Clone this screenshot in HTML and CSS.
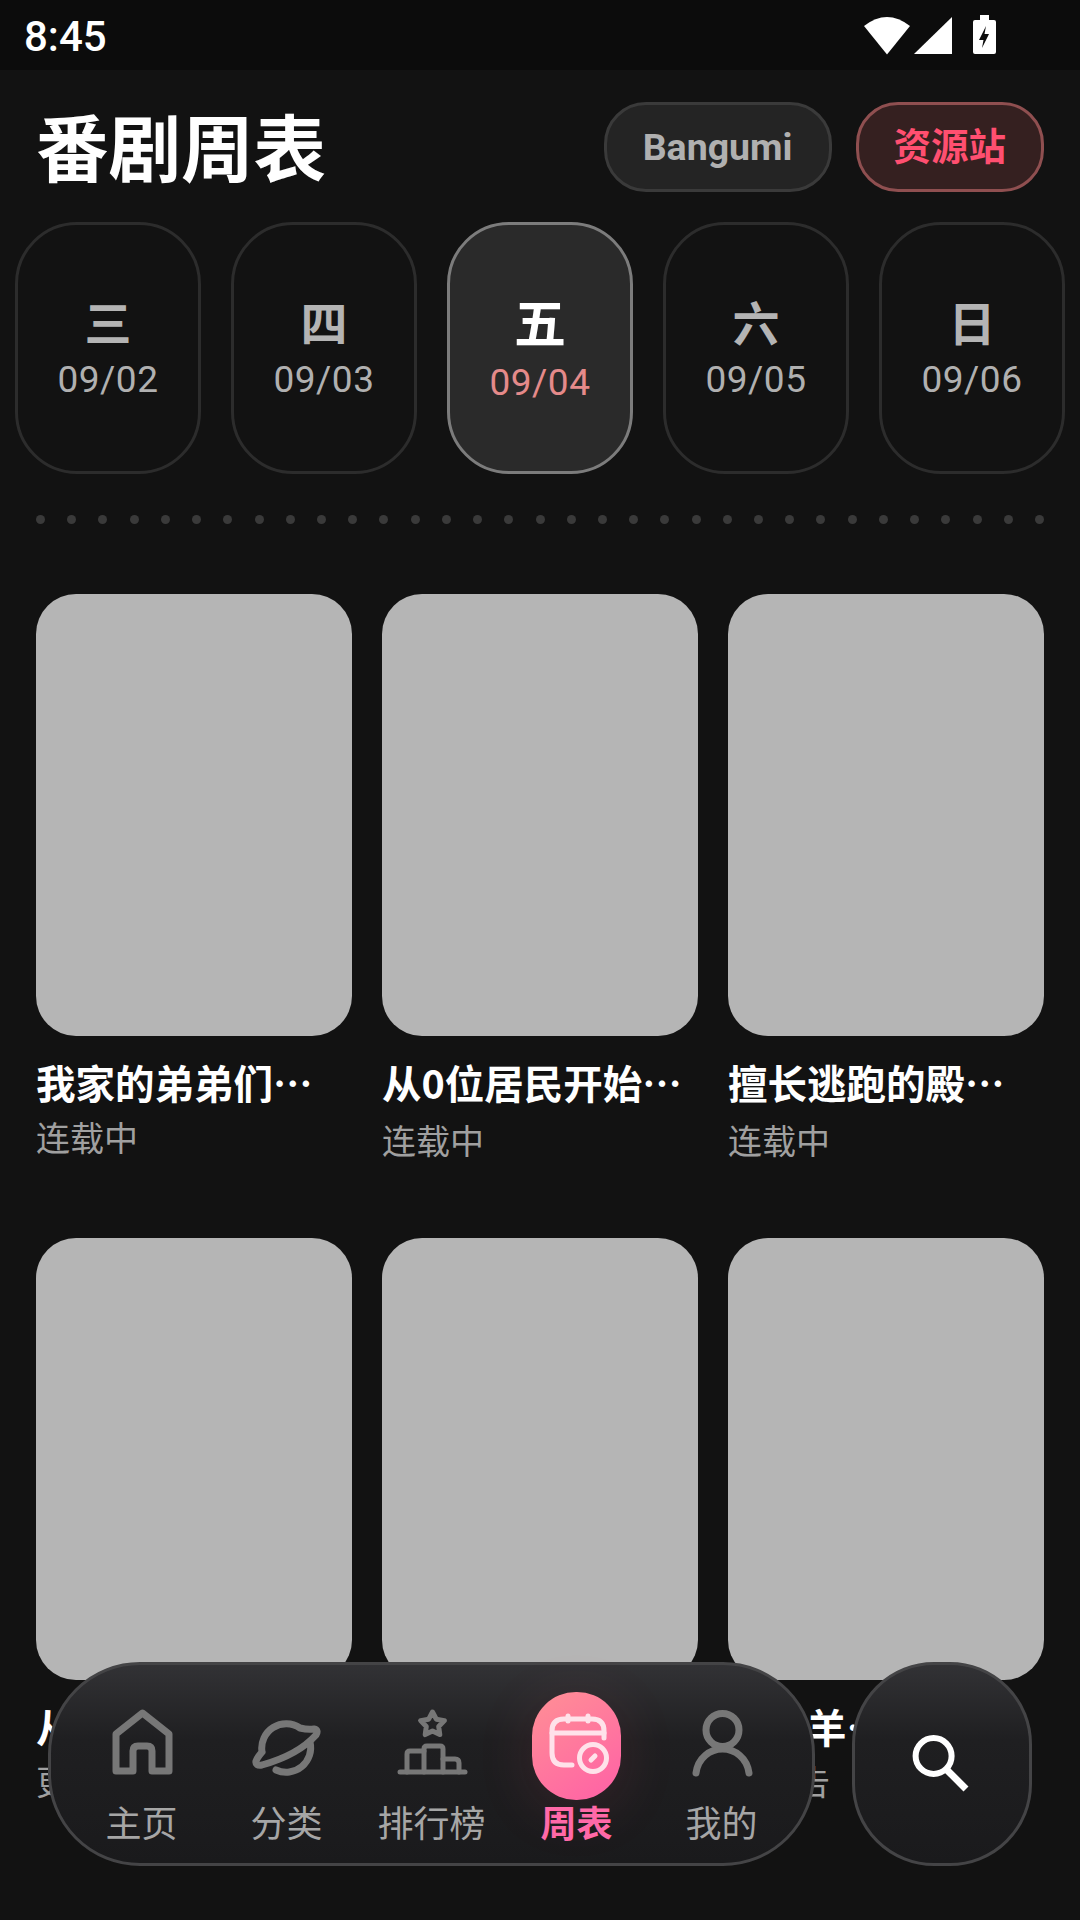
FILE: index.html
```html
<!DOCTYPE html>
<html lang="zh-CN">
<head>
<meta charset="UTF-8">
<meta name="viewport" content="width=device-width, initial-scale=1.0">
<title>番剧周表</title>
<link rel="stylesheet" href="styles.css">
</head>
<body>
<div class="status-bar">
    <span class="status-time">8:45</span>
    <div class="status-icons">
        <svg class="icon-wifi" width="46" height="38" viewBox="0 0 46 38">
            <path d="M23 37.5 L0 9 Q23 -9 46 9 Z" fill="#fff"/>
        </svg>
        <svg class="icon-signal" width="38" height="38" viewBox="0 0 38 38">
            <path d="M38 0 V37 H0 Z" fill="#fff"/>
        </svg>
        <svg class="icon-battery" width="23" height="39" viewBox="0 0 23 39">
            <path d="M7 0 H16 V5 H21 Q23 5 23 7 V37 Q23 39 21 39 H2 Q0 39 0 37 V7 Q0 5 2 5 H7 Z" fill="#fff"/>
            <path d="M13 11 L6 25 H10.5 L9 33 L16 19 H11.5 Z" fill="#0c0c0c"/>
        </svg>
    </div>
</div>

<header class="header">
    <h1 class="page-title">番剧周表</h1>
    <div class="header-buttons">
        <div class="pill-button">Bangumi</div>
        <div class="pill-button pill-button-red">资源站</div>
    </div>
</header>

<div class="days">
    <div class="day"><span class="day-name">三</span><span class="day-date">09/02</span></div>
    <div class="day"><span class="day-name">四</span><span class="day-date">09/03</span></div>
    <div class="day day-active"><span class="day-name">五</span><span class="day-date">09/04</span></div>
    <div class="day"><span class="day-name">六</span><span class="day-date">09/05</span></div>
    <div class="day"><span class="day-name">日</span><span class="day-date">09/06</span></div>
</div>

<div class="dots">
    <i></i><i></i><i></i><i></i><i></i><i></i><i></i><i></i><i></i><i></i><i></i>
    <i></i><i></i><i></i><i></i><i></i><i></i><i></i><i></i><i></i><i></i><i></i>
    <i></i><i></i><i></i><i></i><i></i><i></i><i></i><i></i><i></i><i></i><i></i>
</div>

<div class="grid">
    <div class="card">
        <div class="cover"></div>
        <div class="card-title">我家的弟弟们…</div>
        <div class="card-status">连载中</div>
    </div>
    <div class="card">
        <div class="cover"></div>
        <div class="card-title">从0位居民开始…</div>
        <div class="card-status card-status-low">连载中</div>
    </div>
    <div class="card">
        <div class="cover"></div>
        <div class="card-title">擅长逃跑的殿…</div>
        <div class="card-status card-status-low">连载中</div>
    </div>
    <div class="card">
        <div class="cover"></div>
        <div class="card-title">从前有座山…</div>
        <div class="card-status">更新中</div>
    </div>
    <div class="card">
        <div class="cover"></div>
    </div>
    <div class="card">
        <div class="cover"></div>
        <div class="card-title">小绵羊…</div>
        <div class="card-status">未公告</div>
    </div>
</div>

<nav class="bottom-nav">
    <div class="nav-item">
        <div class="nav-icon">
            <svg width="72" height="72" viewBox="-7 -2 72 72">
                <path d="M3 24 L29.5 3 L56 24 V61 H39 V41 Q39 36 34 36 H25 Q20 36 20 41 V61 H3 Z"/>
            </svg>
        </div>
        <span class="nav-label">主页</span>
    </div>
    <div class="nav-item">
        <div class="nav-icon">
            <svg width="72" height="72" viewBox="1 -7 72 72">
                <path d="M12 37 A24.5 24.5 0 0 1 50 13 Q58 15 64 14 Q69 15 66 20 Q48 40 12 50 Q5 51 6 46 Q7 43 12 37"/>
                <path d="M60 27 A24.5 24.5 0 0 1 26 55"/>
            </svg>
        </div>
        <span class="nav-label">分类</span>
    </div>
    <div class="nav-item">
        <div class="nav-icon">
            <svg width="72" height="72" viewBox="-4 0 72 72">
                <path class="thin" d="M0 64 H65"/>
                <path class="thin" d="M7 64 V46 Q7 43 10 43 H24"/>
                <path class="thin" d="M24 64 V41 Q24 38 27 38 H40 Q43 38 43 41 V64"/>
                <path class="thin" d="M43 51 H55 Q59 51 59 55 V64"/>
                <path class="thin" d="M32.5 4 L36.3 11.2 L44.4 12.6 L38.7 18.5 L39.8 26.6 L32.5 23 L25.2 26.6 L26.3 18.5 L20.6 12.6 L28.7 11.2 Z"/>
            </svg>
        </div>
        <span class="nav-label">排行榜</span>
    </div>
    <div class="nav-item nav-item-active">
        <div class="nav-icon">
            <svg width="72" height="72" viewBox="-7 -5 72 72">
                <path d="M56 25 V18 Q56 6 44 6 H16 Q4 6 4 18 V40 Q4 52 16 52 H24"/>
                <path d="M4 20 H56"/>
                <path d="M20 3 V8"/>
                <path d="M40 3 V8"/>
                <circle cx="45" cy="45" r="13.5"/>
                <path d="M43 47 L47 43"/>
            </svg>
        </div>
        <span class="nav-label">周表</span>
    </div>
    <div class="nav-item">
        <div class="nav-icon">
            <svg width="72" height="72" viewBox="-4 0 72 72">
                <circle cx="32.5" cy="22" r="16.5"/>
                <path d="M6 65 C8 50 20 41 32.5 41 C45 41 57 50 59 65"/>
            </svg>
        </div>
        <span class="nav-label">我的</span>
    </div>
</nav>

<div class="search-button">
    <svg width="62" height="62" viewBox="0 0 62 62">
        <circle cx="23.6" cy="24" r="18" fill="none" stroke="#fff" stroke-width="6"/>
        <path d="M37 38 L56 57" stroke="#fff" stroke-width="7" fill="none"/>
    </svg>
</div>
</body>
</html>
```

FILE: styles.css
```css
* {
    box-sizing: border-box;
}
html, body {
    width: 1080px;
    height: 1920px;
    margin: 0;
    padding: 0;
    overflow: hidden;
}
body {
    position: relative;
    background: #121212;
    color: #fff;
    font-family: "Noto Sans CJK SC", Roboto, sans-serif;
}

.status-bar {
    height: 70px;
    background: #0c0c0c;
    display: flex;
    align-items: flex-start;
    justify-content: space-between;
    padding: 13px 84px 0 24px;
}
.status-time {
    font-family: Roboto, sans-serif;
    font-size: 42px;
    font-weight: 500;
    line-height: 48px;
}
.status-icons {
    display: flex;
    align-items: flex-start;
    gap: 4px;
    margin-top: 2px;
}
.icon-wifi, .icon-signal {
    margin-top: 2px;
}
.icon-battery {
    margin-left: 17px;
}

.header {
    height: 152px;
    display: flex;
    align-items: flex-start;
    justify-content: space-between;
    padding: 27px 36px 0;
}
.page-title {
    margin: 0;
    font-size: 72.5px;
    font-weight: 700;
    line-height: 96px;
}
.header-buttons {
    display: flex;
    gap: 24px;
    margin-top: 5px;
}
.pill-button {
    height: 90px;
    padding: 0 36px;
    border: 3px solid #3a3a3a;
    border-radius: 42px;
    background: #242424;
    color: #b0b0b0;
    font-family: Roboto, "Noto Sans CJK SC", sans-serif;
    font-size: 37.5px;
    font-weight: 700;
    line-height: 84px;
}
.pill-button-red {
    padding: 0 35px;
    border-color: #8f4f50;
    background: #352020;
    color: #ff4f70;
}

.days {
    display: flex;
    gap: 30px;
    padding-left: 15px;
}
.day {
    width: 186px;
    height: 252px;
    border: 3px solid #2c2c2c;
    border-radius: 62px;
    display: flex;
    flex-direction: column;
    align-items: center;
    padding-top: 66px;
}
.day-name {
    font-size: 47px;
    font-weight: 700;
    line-height: 60px;
    color: #b4b4b4;
}
.day-date {
    font-family: Roboto, sans-serif;
    font-size: 37px;
    font-weight: 400;
    letter-spacing: 0.5px;
    line-height: 42px;
    margin-top: 8px;
    color: #b0b0b0;
}
.day-active {
    background: #2a2a2a;
    border-color: #7c7c7c;
}
.day-active .day-name {
    font-size: 52px;
    color: #fff;
}
.day-active .day-date {
    margin-top: 11px;
    color: #e58a8a;
}

.dots {
    display: flex;
    justify-content: space-between;
    margin: 41px 36px 0;
}
.dots i {
    width: 9px;
    height: 9px;
    border-radius: 50%;
    background: #3a3a3a;
}

.grid {
    display: grid;
    grid-template-columns: repeat(3, 316px);
    column-gap: 30px;
    row-gap: 78px;
    padding: 70px 36px 0;
}
.cover {
    height: 442px;
    border-radius: 40px;
    background: #b5b5b5;
}
.card-title {
    margin-top: 23px;
    font-size: 39.5px;
    font-weight: 700;
    line-height: 46px;
    white-space: nowrap;
}
.card-status {
    margin-top: 12px;
    font-size: 34px;
    line-height: 40px;
    color: #a0a0a0;
}
.card-status-low {
    margin-top: 15px;
}

.bottom-nav {
    position: absolute;
    left: 48px;
    top: 1662px;
    width: 767px;
    height: 204px;
    padding: 27px 0 0 18px;
    display: flex;
    border: 3px solid #444446;
    border-radius: 92px;
    background: linear-gradient(180deg, #323235 0%, #1f1f21 38%, #1a1a1c 100%);
}
.nav-item {
    width: 145px;
    display: flex;
    flex-direction: column;
    align-items: center;
}
.nav-icon {
    width: 89px;
    height: 108px;
    margin-bottom: 1px;
    padding-top: 16px;
    display: flex;
    justify-content: center;
}
.nav-icon svg {
    fill: none;
    stroke: #777;
    stroke-width: 7px;
    stroke-linejoin: round;
    stroke-linecap: round;
}
.nav-icon svg .thin {
    stroke-width: 5px;
}
.nav-label {
    font-size: 36px;
    line-height: 40px;
    color: #a6a6a6;
}
.nav-item-active .nav-icon {
    border-radius: 44px;
    background: linear-gradient(145deg, #ff9095, #ff60a6);
    box-shadow: 0 10px 60px rgba(255, 90, 120, 0.12);
}
.nav-item-active .nav-icon svg {
    stroke: #ffe2ea;
    stroke-width: 5px;
}
.nav-item-active .nav-label {
    font-weight: 700;
    color: #ff69a8;
}

.search-button {
    position: absolute;
    left: 852px;
    top: 1662px;
    width: 180px;
    height: 204px;
    padding: 67px 0 0 55px;
    border: 3px solid #444446;
    border-radius: 82px;
    background: linear-gradient(180deg, #323235 0%, #1f1f21 38%, #1a1a1c 100%);
}
```
